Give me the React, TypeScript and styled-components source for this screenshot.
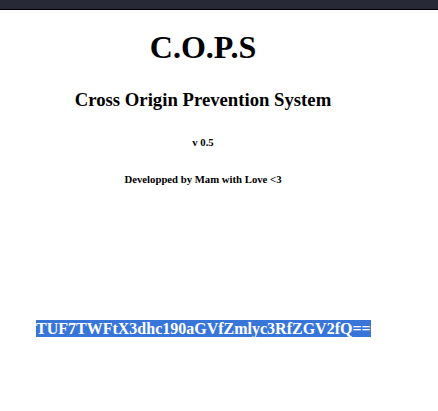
import React from "react";
import styled, { createGlobalStyle } from "styled-components";

const Global = createGlobalStyle`
  html, body { margin: 0; padding: 0; background: #ffffff; }
  body { font-family: "Liberation Serif", "Times New Roman", serif; color: #000; }
`;

const TopBar = styled.div`
  height: 9px;
  background: #272a36;
  border-bottom: 1px solid #000;
`;

const Main = styled.main`
  width: 406px;
  display: flex;
  flex-direction: column;
  align-items: center;
`;

const Title = styled.h1`
  font-size: 32px;
  font-weight: bold;
  margin: 19px 0 0;
  line-height: 37px;
`;

const Subtitle = styled.h3`
  font-size: 18.72px;
  font-weight: bold;
  margin: 23px 0 0;
`;

const Small = styled.h6<{ $top: number }>`
  font-size: 10.72px;
  font-weight: bold;
  margin: ${(p) => p.$top}px 0 0;
`;

const SecretRow = styled.div`
  align-self: stretch;
  padding: 135px 0 0 36px;
  font-size: 16px;
  line-height: 18px;
  font-weight: bold;
`;

const Selected = styled.span`
  background: #3875d8;
  color: #ffffff;
`;

export default function App() {
  return (
    <>
      <Global />
      <TopBar />
      <Main>
        <Title>C.O.P.S</Title>
        <Subtitle>Cross Origin Prevention System</Subtitle>
        <Small $top={25}>v 0.5</Small>
        <Small $top={25}>Developped by Mam with Love &lt;3</Small>
        <SecretRow>
          <Selected>TUF7TWFtX3dhc190aGVfZmlyc3RfZGV2fQ==</Selected>
        </SecretRow>
      </Main>
    </>
  );
}
